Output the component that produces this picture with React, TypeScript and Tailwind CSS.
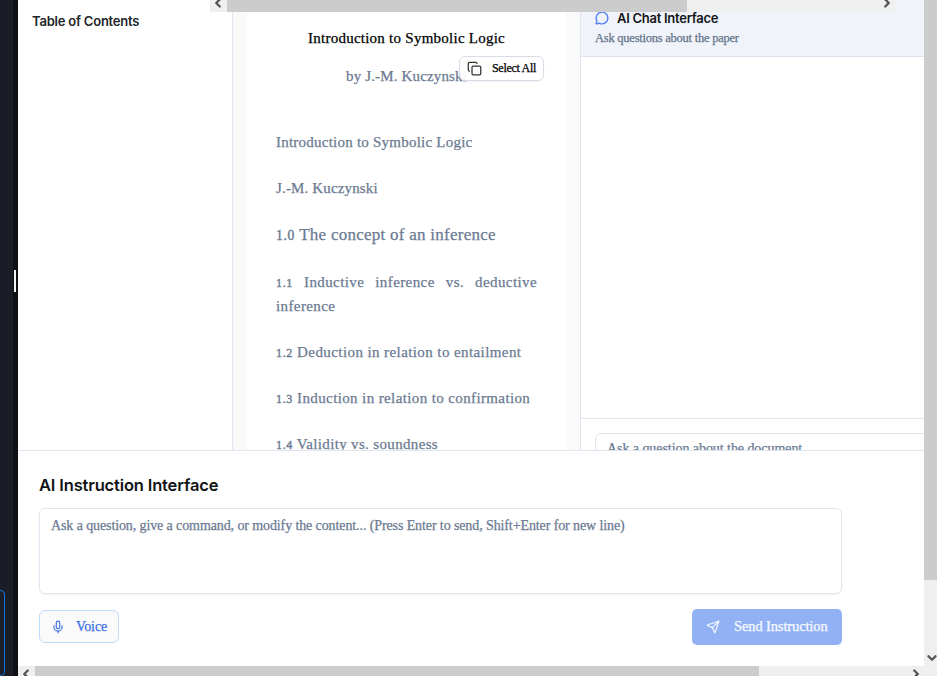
import { ChevronDown, ChevronLeft, ChevronRight, Copy, MessageCircle, Mic, Send } from "lucide-react";

const serif = "font-['Georgia','Liberation_Serif',serif] [-webkit-text-stroke:0.25px]";

function Sidebar() {
  return (
    <aside className="flex w-[18px] shrink-0">
      <div className="flex w-[13px] flex-col justify-end bg-[#1a1d25]">
        <div className="h-[86px] w-[5px] rounded-r-[5px] border border-l-0 border-[#0f74e4] bg-[#1b1f29]" />
      </div>
      <div className="flex w-[5px] flex-col bg-[#0f0f16] pt-[270px] pl-px">
        <div className="h-[22px] w-[2px] bg-[#f2f5f7]" />
      </div>
    </aside>
  );
}

function TopScrollbar() {
  return (
    <div className="absolute top-0 left-[192px] flex h-3 w-[685px] overflow-hidden bg-[#efefef] text-[#555]">
      <div className="flex w-[17px] justify-center">
        <ChevronLeft className="-mt-1 -ml-px size-[14px] shrink-0" strokeWidth={4} />
      </div>
      <div className="w-[460px] bg-[#cccccc]" />
      <div className="flex flex-1 justify-end pr-px">
        <ChevronRight className="-mt-1 size-[14px] shrink-0" strokeWidth={4} />
      </div>
    </div>
  );
}

function Num({ children }: { children: string }) {
  return <span className="text-[0.8em] leading-none tracking-[0.65px] [-webkit-text-stroke:0.4px]">{children}</span>;
}

function Paper() {
  return (
    <section className="w-[348px] shrink-0 border-r border-[#dfe6ef] bg-[#fafafa] px-[14px]">
      <div className="relative h-full bg-white px-[29px] pt-[26px] text-[15px] leading-6 text-[#6b7a92]">
        <h1 className="text-center text-[15px] tracking-[0.25px] whitespace-nowrap text-black">Introduction to Symbolic Logic</h1>
        <p className="mt-[14px] text-center tracking-[0.15px]">by J.-M. Kuczynski</p>
        <div className="mt-[42px] flex flex-col gap-[22px] whitespace-nowrap">
          <p className="tracking-[0.23px]">Introduction to Symbolic Logic</p>
          <p className="tracking-[0.15px]">J.-M. Kuczynski</p>
          <h2 className="h-[26px] text-[17px] leading-[26px] tracking-[0.26px]"><Num>1.0</Num> The concept of an inference</h2>
          <p className="w-[261px] text-justify tracking-[0.4px] whitespace-normal"><Num>1.1</Num> Inductive inference vs. deductive inference</p>
          <p className="tracking-[0.41px]"><Num>1.2</Num> Deduction in relation to entailment</p>
          <p className="tracking-[0.38px]"><Num>1.3</Num> Induction in relation to confirmation</p>
          <p className="tracking-[0.34px]"><Num>1.4</Num> Validity vs. soundness</p>
        </div>
        <button className="absolute top-14 left-[212px] flex h-[25px] w-[85px] items-center rounded-md border border-[#d9dce6] bg-white/95 pl-[7px] text-black shadow-xs">
          <Copy className="size-[15px] text-[#333]" strokeWidth={2} />
          <span className="ml-[10px] pb-px text-[12px] tracking-[-0.3px] whitespace-nowrap [-webkit-text-stroke:0.25px]">Select All</span>
        </button>
      </div>
    </section>
  );
}

function Chat() {
  return (
    <section className="flex min-w-0 flex-1 flex-col overflow-hidden">
      <header className="h-[57px] border-b border-[#dce4ef] bg-[#f0f3f9] pt-[9px] pl-[14px]">
        <h2 className="flex h-[18px] items-center gap-[8px] font-['Inter',sans-serif] text-[13px] font-semibold tracking-[-0.27px] text-[#14161a] [-webkit-text-stroke:0px]">
          <MessageCircle className="size-[14px] text-[#4f83f1]" strokeWidth={2.4} />
          <span className="pt-px">AI Chat Interface</span>
        </h2>
        <p className="mt-[3px] text-[12.5px] leading-4 tracking-[-0.24px] text-[#64748b]">Ask questions about the paper</p>
      </header>
      <div className="flex-1" />
      <footer className="h-8 shrink-0 border-t border-[#dfe6ef] pt-[14px] pl-[14px]">
        <div className="h-9 w-[400px] rounded-md border border-[#dfe6ef] pt-[6px] pl-[11px] text-[14px] leading-[18px] tracking-[-0.06px] whitespace-nowrap text-[#6b7a92]">
          Ask a question about the document...
        </div>
      </footer>
    </section>
  );
}

function Instructions() {
  return (
    <section className="h-[216px] shrink-0 border-t border-[#dfe6ef] bg-white pl-[21px]">
      <div className="w-[803px]">
        <h2 className="pt-[22px] font-['Inter',sans-serif] text-[16.5px] leading-6 font-semibold tracking-[-0.15px] text-[#111315] [-webkit-text-stroke:0px]">AI Instruction Interface</h2>
        <div className="mt-[11px] h-[86px] rounded-md border border-[#dfe4ee] px-[11px] pt-[8px] text-[14px] leading-[18px] tracking-[-0.105px] whitespace-nowrap text-[#6b7a92] shadow-xs">
          Ask a question, give a command, or modify the content... (Press Enter to send, Shift+Enter for new line)
        </div>
        <div className="mt-[15px] flex items-start justify-between">
          <button className="mt-px flex h-[33px] w-20 items-center rounded-md border border-[#bddcfb] bg-[#fafafa] pl-[11px] text-[#3b6fe8]">
            <Mic className="size-[14px]" strokeWidth={2} />
            <span className="ml-[11px] text-[14px] tracking-[-0.1px]">Voice</span>
          </button>
          <button className="flex h-9 w-[150px] items-center rounded-[5px] bg-[#92b1f5] pl-[14px] text-white/90">
            <Send className="size-[14px]" strokeWidth={2} />
            <span className="ml-[14px] text-[14.5px] tracking-[-0.12px] whitespace-nowrap">Send Instruction</span>
          </button>
        </div>
      </div>
    </section>
  );
}

export default function App() {
  return (
    <div className={`flex h-[676px] w-[937px] overflow-hidden bg-white ${serif}`}>
      <Sidebar />
      <main className="flex w-[906px] shrink-0 flex-col">
        <div className="relative flex h-[450px] shrink-0 overflow-hidden">
          <nav className="w-[215px] shrink-0 border-r border-[#dfe6ef] pt-3 pl-[14px]">
            <h2 className="font-['Inter',sans-serif] text-[13px] leading-[18px] font-semibold tracking-[-0.22px] text-[#222528] [-webkit-text-stroke:0px]">Table of Contents</h2>
          </nav>
          <Paper />
          <Chat />
          <TopScrollbar />
        </div>
        <Instructions />
        <div className="flex h-[10px] overflow-hidden bg-[#efefef] text-[#555]">
          <div className="flex w-[17px] justify-center">
            <ChevronLeft className="mt-px -ml-px size-[14px] shrink-0" strokeWidth={4} />
          </div>
          <div className="w-[724px] bg-[#cccccc]" />
          <div className="flex flex-1 justify-end pr-px">
            <ChevronRight className="mt-px size-[14px] shrink-0" strokeWidth={4} />
          </div>
        </div>
      </main>
      <div className="flex w-[13px] shrink-0 flex-col bg-[#efefef] text-[#555]">
        <div className="h-[580px] bg-[#cccccc]" />
        <ChevronDown className="mt-[71px] ml-px size-[14px]" strokeWidth={4} />
      </div>
    </div>
  );
}
